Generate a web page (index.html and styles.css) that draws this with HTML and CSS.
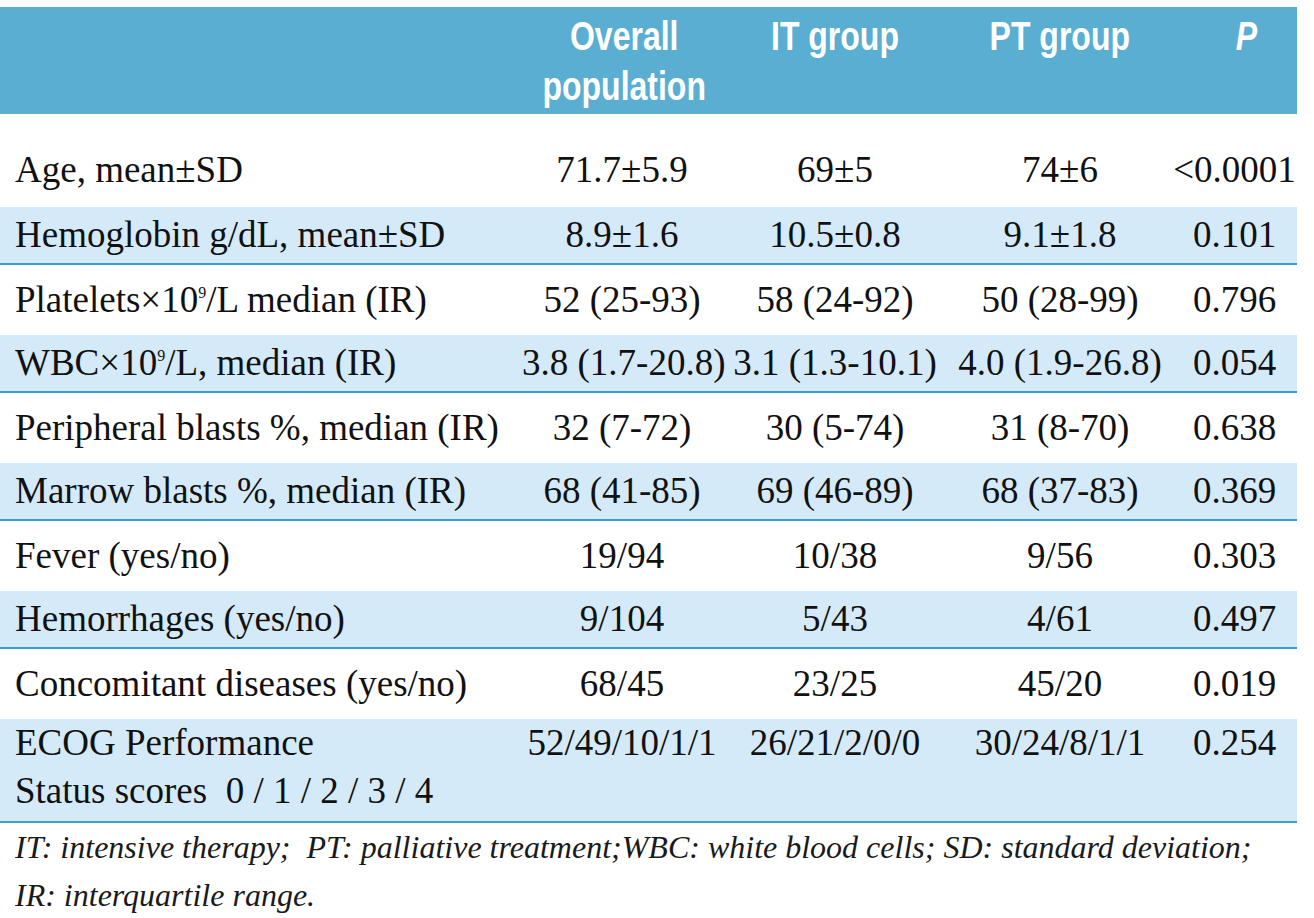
FILE: index.html
```html
<!DOCTYPE html>
<html lang="en">
<head>
<meta charset="utf-8">
<title>Patient characteristics</title>
<link rel="stylesheet" href="styles.css">
</head>
<body>
<div class="page">
  <table class="tbl">
    <colgroup>
      <col class="c-label"><col class="c-all"><col class="c-it"><col class="c-pt"><col class="c-p">
    </colgroup>
    <thead>
      <tr>
        <th class="h-label"></th>
        <th><span class="hx">Overall<br>population</span></th>
        <th><span class="hx">IT group</span></th>
        <th><span class="hx">PT group</span></th>
        <th class="h-p"><span class="hx"><i>P</i></span></th>
      </tr>
    </thead>
    <tbody>
      <tr class="row first">
        <td class="lab">Age, mean±SD</td><td>71.7±5.9</td><td>69±5</td><td>74±6</td><td>&lt;0.0001</td>
      </tr>
      <tr class="row band">
        <td class="lab">Hemoglobin g/dL, mean±SD</td><td>8.9±1.6</td><td>10.5±0.8</td><td>9.1±1.8</td><td>0.101</td>
      </tr>
      <tr class="row">
        <td class="lab">Platelets×10<sup>9</sup>/L median (IR)</td><td>52 (25-93)</td><td>58 (24-92)</td><td>50 (28-99)</td><td>0.796</td>
      </tr>
      <tr class="row band">
        <td class="lab">WBC×10<sup>9</sup>/L, median (IR)</td><td>3.8 (1.7-20.8)</td><td>3.1 (1.3-10.1)</td><td>4.0 (1.9-26.8)</td><td>0.054</td>
      </tr>
      <tr class="row">
        <td class="lab">Peripheral blasts %, median (IR)</td><td>32 (7-72)</td><td>30 (5-74)</td><td>31 (8-70)</td><td>0.638</td>
      </tr>
      <tr class="row band">
        <td class="lab">Marrow blasts %, median (IR)</td><td>68 (41-85)</td><td>69 (46-89)</td><td>68 (37-83)</td><td>0.369</td>
      </tr>
      <tr class="row">
        <td class="lab">Fever (yes/no)</td><td>19/94</td><td>10/38</td><td>9/56</td><td>0.303</td>
      </tr>
      <tr class="row band">
        <td class="lab">Hemorrhages (yes/no)</td><td>9/104</td><td>5/43</td><td>4/61</td><td>0.497</td>
      </tr>
      <tr class="row">
        <td class="lab">Concomitant diseases (yes/no)</td><td>68/45</td><td>23/25</td><td>45/20</td><td>0.019</td>
      </tr>
      <tr class="row band tall">
        <td class="lab">ECOG Performance<br>Status scores&nbsp; 0 / 1 / 2 / 3 / 4</td><td>52/49/10/1/1</td><td>26/21/2/0/0</td><td>30/24/8/1/1</td><td>0.254</td>
      </tr>
    </tbody>
  </table>
  <p class="note">IT: intensive therapy;&nbsp; PT: palliative treatment;WBC: white blood cells; SD: standard deviation;<br>IR: interquartile range.</p>
</div>
</body>
</html>
```
FILE: styles.css
```css
html, body {
  margin: 0;
  padding: 0;
  background: #ffffff;
}

.page {
  padding-top: 7px;
  width: 1297px;
  color: #111111;
  font-family: "Liberation Serif", "Times New Roman", serif;
}

.tbl {
  width: 1297px;
  border-collapse: collapse;
  table-layout: fixed;
}

.c-label { width: 522px; }
.c-all { width: 200px; }
.c-it { width: 226px; }
.c-pt { width: 224px; }
.c-p { width: 125px; }

.tbl thead th {
  background: #5aaed2;
  height: 107px;
  padding: 0;
  vertical-align: top;
  color: #ffffff;
  font-family: "Liberation Sans", Arial, sans-serif;
  font-weight: bold;
  font-size: 40px;
  line-height: 50px;
  text-align: center;
}

.hx {
  display: inline-block;
  padding-top: 4px;
  transform: scaleX(0.8);
  transform-origin: center top;
}

.h-p .hx {
  padding-left: 30px;
}

.row td {
  padding: 0;
  height: 70px;
  font-size: 37px;
  line-height: 44px;
  text-align: center;
  vertical-align: middle;
  white-space: nowrap;
}

.row td.lab {
  text-align: left;
  padding-left: 15px;
}

.row.first td {
  height: 74px;
  padding-top: 19px;
}

.row.band td {
  background: #d5eaf8;
  height: 56px;
  border-bottom: 2px solid #3a9fd0;
}

.row.tall td {
  height: 102px;
  line-height: 48px;
  vertical-align: top;
}

.row sup {
  font-size: 16px;
  line-height: 0;
  vertical-align: 14px;
}

.note {
  margin: 0;
  padding-left: 15px;
  font-style: italic;
  font-size: 32px;
  line-height: 48px;
  color: #1a1a1a;
}
```
